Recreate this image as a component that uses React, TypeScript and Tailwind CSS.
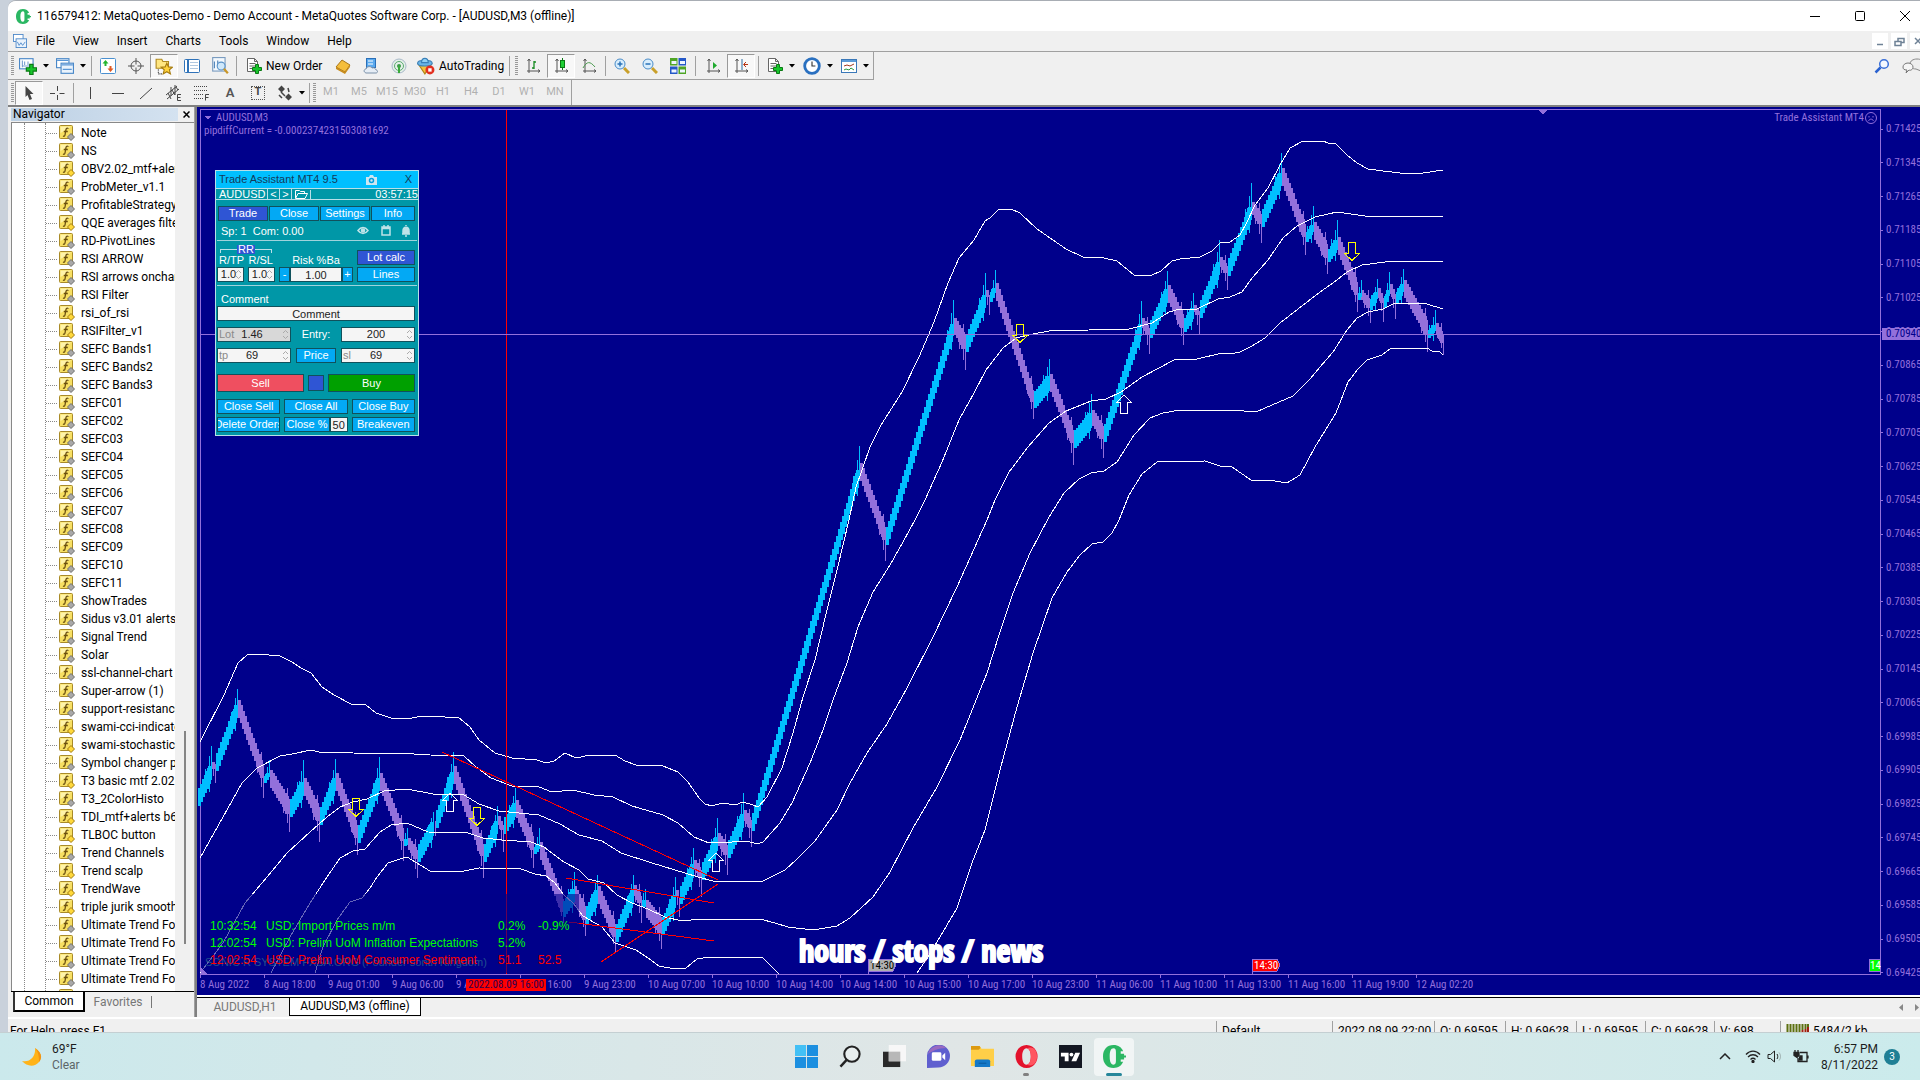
import type React from 'react';
import { useState } from 'react';

type Children = { children: React.ReactNode };

const UI = "font-['Roboto','Noto_Sans',sans-serif]";
const TAHOMA = "font-['Roboto_Condensed','Liberation_Sans_Narrow','Roboto',sans-serif]";
const ARIAL = "font-['Liberation_Sans',Arial,sans-serif]";

/* ---------- data ---------- */

const indicators: [string, boolean?][] = [
	['Note'],
	['NS'],
	['OBV2.02_mtf+alerts', true],
	['ProbMeter_v1.1'],
	['ProfitableStrategy'],
	['QQE averages filtered', true],
	['RD-PivotLines'],
	['RSI ARROW'],
	['RSI arrows onchart'],
	['RSI Filter'],
	['rsi_of_rsi', true],
	['RSIFilter_v1', true],
	['SEFC Bands1'],
	['SEFC Bands2'],
	['SEFC Bands3'],
	['SEFC01'],
	['SEFC02'],
	['SEFC03'],
	['SEFC04'],
	['SEFC05'],
	['SEFC06'],
	['SEFC07'],
	['SEFC08'],
	['SEFC09'],
	['SEFC10'],
	['SEFC11'],
	['ShowTrades'],
	['Sidus v3.01 alerts'],
	['Signal Trend'],
	['Solar'],
	['ssl-channel-chart'],
	['Super-arrow (1)'],
	['support-resistance'],
	['swami-cci-indicator', true],
	['swami-stochastic-', true],
	['Symbol changer p'],
	['T3 basic mtf 2.02', true],
	['T3_2ColorHisto'],
	['TDI_mtf+alerts b6', true],
	['TLBOC button', true],
	['Trend Channels'],
	['Trend scalp', true],
	['TrendWave', true],
	['triple jurik smooth', true],
	['Ultimate Trend Fo'],
	['Ultimate Trend Fo'],
	['Ultimate Trend Fo'],
	['Ultimate Trend Fo'],
	[''],
];

const prices = Array.from({ length: 26 }, (_, i) =>
	(0.71425 - i * 0.0008).toFixed(5),
);

const times = [
	'8 Aug 2022',
	'8 Aug 18:00',
	'9 Aug 01:00',
	'9 Aug 06:00',
	'9 Aug 11:00',
	'9 Aug 16:00',
	'9 Aug 23:00',
	'10 Aug 07:00',
	'10 Aug 10:00',
	'10 Aug 14:00',
	'10 Aug 14:00',
	'10 Aug 15:00',
	'10 Aug 17:00',
	'10 Aug 23:00',
	'11 Aug 06:00',
	'11 Aug 10:00',
	'11 Aug 13:00',
	'11 Aug 16:00',
	'11 Aug 19:00',
	'12 Aug 02:20',
];

const timeframes = ['M1', 'M5', 'M15', 'M30', 'H1', 'H4', 'D1', 'W1', 'MN'];

const menus = ['File', 'View', 'Insert', 'Charts', 'Tools', 'Window', 'Help'];

const status = [
	{ text: 'Default', width: 'w-[116px]' },
	{ text: '2022.08.09 22:00', width: 'w-[102px]' },
	{ text: 'O: 0.69595', width: 'w-[71px]' },
	{ text: 'H: 0.69628', width: 'w-[71px]' },
	{ text: 'L: 0.69595', width: 'w-[69px]' },
	{ text: 'C: 0.69628', width: 'w-[69px]' },
	{ text: 'V: 698', width: 'w-[66px]' },
];

// swing points: x, body extreme, wick tip
const swings = [
	[198, 806, 806], [212, 762, 746], [216, 771, 783], [238, 700, 689],
	[264, 783, 798], [270, 770, 760], [290, 817, 832], [304, 778, 760],
	[320, 825, 842], [336, 773, 759], [358, 843, 855], [380, 773, 757],
	[404, 846, 861], [408, 838, 828], [418, 862, 878], [434, 818, 812],
	[436, 828, 836], [454, 766, 752], [484, 862, 878], [498, 816, 806],
	[504, 834, 852], [516, 800, 788], [534, 854, 868], [540, 842, 828],
	[563, 917, 923], [574, 886, 872], [586, 924, 936], [598, 886, 875],
	[616, 942, 953], [634, 885, 875], [642, 907, 923], [646, 900, 889],
	[662, 935, 949], [676, 890, 877], [680, 904, 917], [694, 860, 848],
	[702, 880, 897], [718, 833, 818], [728, 858, 875], [744, 810, 793],
	[752, 831, 847], [860, 463, 446], [886, 545, 561], [954, 318, 300],
	[966, 352, 370], [986, 290, 273], [990, 302, 315], [996, 283, 270],
	[1034, 408, 419], [1050, 374, 359], [1074, 448, 465], [1092, 410, 394],
	[1104, 442, 458], [1142, 318, 301], [1150, 338, 354], [1168, 285, 271],
	[1184, 332, 345], [1194, 305, 293], [1200, 318, 334], [1220, 257, 240],
	[1228, 276, 290], [1252, 202, 183], [1262, 227, 243], [1282, 168, 153],
	[1306, 242, 255], [1314, 222, 206], [1328, 262, 274], [1338, 237, 220],
	[1358, 300, 312], [1361, 290, 280], [1370, 310, 323], [1378, 288, 279],
	[1384, 308, 322], [1390, 284, 272], [1396, 304, 319], [1404, 280, 269],
	[1428, 338, 352], [1436, 323, 310], [1444, 347, 355],
];

const bands = [
	'200,742 224,695 238,663 247,655 257,654 269,655 280,656 292,662 301,668 311,673 322,687 334,695 351,704 366,705 376,713 391,718 407,719 422,716 445,717 458,717 470,727 479,740 495,753 512,758 537,760 546,763 554,761 565,753 576,758 590,755 615,755 625,761 636,765 663,766 678,772 688,782 699,798 705,804 712,806 722,803 735,805 743,802 753,805 758,807 767,797 782,768 793,733 803,697 815,660 827,610 837,570 849,520 856,487 862,470 870,447 881,425 902,392 919,357 934,322 948,283 959,258 974,240 985,221 990,218 999,209 1011,209 1020,213 1037,229 1066,249 1083,257 1104,258 1117,261 1134,275 1150,276 1161,271 1172,261 1180,259 1200,257 1212,251 1220,243 1230,242 1240,235 1247,222 1255,205 1268,188 1280,165 1290,148 1303,141 1323,141 1328,143 1335,143 1347,155 1357,163 1368,169 1383,171 1400,173 1423,173 1443,170',
	'200,858 223,817 242,783 257,768 280,756 292,754 311,750 319,752 353,753 414,754 430,755 464,756 476,767 491,778 512,786 539,787 552,792 573,790 594,795 613,797 632,806 663,815 678,823 694,837 709,843 732,842 747,841 757,844 763,842 780,823 792,803 810,763 823,730 833,700 847,663 858,627 873,592 890,565 903,542 915,520 925,500 942,462 959,420 974,393 986,370 1003,348 1016,338 1033,334 1049,331 1089,330 1104,329 1129,329 1152,323 1169,312 1180,309 1197,309 1218,299 1230,297 1242,292 1252,278 1268,260 1283,238 1297,226 1315,217 1337,212 1365,216 1443,216',
	'200,973 223,943 245,903 267,877 287,853 310,832 327,817 340,807 353,802 367,799 384,791 407,789 433,794 464,795 479,804 499,811 539,815 560,824 579,835 602,841 621,853 652,863 698,877 713,881 763,881 785,870 797,859 815,841 837,810 850,783 867,753 887,724 907,688 933,637 957,587 970,558 987,520 995,500 1009,472 1028,447 1049,423 1066,411 1091,401 1106,399 1121,392 1142,377 1174,360 1197,359 1218,354 1235,353 1240,352 1252,346 1265,338 1280,323 1320,292 1333,283 1347,272 1362,265 1393,261 1430,261 1443,262',
	'271,973 290,937 310,903 327,877 340,858 353,851 365,849 380,832 391,825 407,823 428,832 468,833 483,838 502,840 531,842 544,847 564,862 579,870 588,879 604,883 617,895 632,903 648,909 665,917 682,921 700,919 760,919 775,923 788,927 813,930 837,926 850,918 873,897 890,872 913,828 937,787 960,740 987,673 1000,632 1013,593 1030,553 1049,517 1064,493 1079,479 1091,473 1104,471 1117,462 1134,435 1150,418 1163,413 1180,410 1232,410 1256,412 1272,405 1293,396 1310,379 1320,367 1333,352 1347,330 1357,318 1368,312 1383,309 1393,304 1403,303 1427,304 1443,309',
	'315,973 323,947 337,920 350,902 362,898 370,888 377,877 388,863 403,858 407,857 430,871 464,871 479,868 521,869 535,874 546,876 554,882 564,895 573,903 583,916 602,927 615,943 636,950 648,958 659,966 675,969 686,968 697,959 710,957 727,958 753,957 762,957 770,965 779,974',
	'917,973 928,957 940,937 957,908 972,863 985,830 1000,770 1017,707 1033,653 1052,598 1067,572 1080,555 1092,544 1103,542 1112,533 1119,520 1129,495 1142,474 1157,462 1205,461 1220,466 1232,467 1251,480 1275,481 1287,483 1300,475 1315,447 1336,413 1348,382 1358,369 1367,360 1382,355 1390,349 1410,348 1427,348 1432,351 1440,352 1443,355',
];

const BODY = 18;

function buildCandles() {
	let up = '';
	let down = '';
	for (let i = 1; i < swings.length; i++) {
		const [x0, y0] = swings[i - 1];
		const [x1, y1, tip] = swings[i];
		const rising = y1 < y0;
		const dir = rising ? -1 : 1;
		const bars = Math.max(1, Math.round((x1 - x0) / 2));
		// short swings get shorter bodies so that they stay readable
		const body = Math.min(BODY, Math.max(7, Math.round(Math.abs(y1 - y0) / 2)));
		const start = y0 + dir * body;
		for (let b = 1; b <= bars; b++) {
			const x = x0 + b * 2 - 2;
			const edge = bars === 1 ? y1 : start + ((y1 - start) * (b - 1)) / (bars - 1);
			const top = Math.round(rising ? edge : edge - body);
			const left = bars - b;
			let d = left === 0 ? '' : `M${x} ${top}h3v${body}h-3z`;
			// the last few bars of a swing carry the longer wicks
			if (left < 4) {
				const reach = Math.round([1, 0.6, 0.2, 0.4][left] * Math.abs(tip - y1));
				const y = rising ? top - reach : top;
				d += `M${x + 1} ${y}h1v${reach + body}h-1z`;
			}
			if (left === 1 && bars > 3) {
				const y = rising ? top : top - 8;
				d += `M${x + 1} ${y}h1v${body + 8}h-1z`;
			}
			if (rising) up += d;
			else down += d;
		}
	}
	return { up, down };
}

const candles = buildCandles();

/* ---------- small icons ---------- */

const Icon = ({ children, size = 16 }: Children & { size?: number }) => (
	<svg width={size} height={size} viewBox="0 0 16 16" fill="none" className="shrink-0">
		{children}
	</svg>
);

const PlusMark = () => (
	<path d="M9.500 6.500h3v3h3v3h-3v3h-3v-3h-3v-3h3z" fill="#17c52b" stroke="#0a7a14" />
);

const Axes = () => (
	<path d="M4 1v14M2 13h13M2.500 3L4 1l1.500 2M13 11.500l2 1.500-2 1.500" stroke="#555" />
);

const Page = () => (
	<path d="M1.500.500h7l3 3v10h-10zM8.500.500v3h3M3.500 5.500h6M3.500 8h6M3.500 10.500h4" fill="#fff" stroke="#666" />
);

const logoPath =
	'M11 0C4 0 0 5 0 12s4 12 11 12c5 0 8.500-2.500 10-6.500h-2.500v-2.500h3.500v-2h2v-2h-2V9h-3.500V6.500H21C19.500 2.500 16 0 11 0zM11 3.500c2 0 2.500 1.500 2.500 4v9c0 2.500-.5 4-2.500 4-3 0-4-3.500-4-8.500s1-8.500 4-8.500z';

const MetaLogo = ({ size }: { size: number }) => (
	<svg width={size} height={size} viewBox="0 0 24 24" className="shrink-0">
		<path fillRule="evenodd" fill="#2bb763" d={logoPath} />
	</svg>
);

const NavIcon = ({ custom }: { custom?: boolean }) => (
	<svg width="16" height="16" viewBox="0 0 16 16" className="shrink-0">
		<rect x=".5" y=".5" width="13" height="13" rx="1" fill="#f7df62" stroke="#a98a28" />
		<path d="M1.500 8V1.500h11z" fill="#fff3a8" />
		<path d="M9.500 3.500c-2-1-2.500.500-2.700 2L6 10c-.2 1.200-1 1.500-2 1M4.800 6.500h4" stroke="#6b5010" strokeWidth="1.300" fill="none" />
		<path d="M12 8.500l3.500 3.500-3.500 3.500L8.500 12z" fill={custom ? '#ffd83a' : '#a8a8a8'} stroke={custom ? '#a07a10' : '#6e6e6e'} />
	</svg>
);

const Caret = () => (
	<svg width="6" height="4" viewBox="0 0 6 4" className="shrink-0">
		<path d="M0 0h6L3 3.500z" fill="#000" />
	</svg>
);

const ico = {
	newChart: (
		<Icon size={18}>
			<rect x=".5" y="1.500" width="12" height="9" fill="#fff" stroke="#4a88c8" />
			<path d="M3 9V3M3 8h8M5 4v3M8 4v3" stroke="#7aa0d0" />
			<PlusMark />
		</Icon>
	),
	profiles: (
		<Icon size={18}>
			<rect x=".5" y="1.500" width="11" height="8" fill="#fff" stroke="#4a88c8" />
			<rect x="4.500" y="5.500" width="11" height="9" fill="#eaf3fc" stroke="#4a88c8" />
			<path d="M1 3h10M5 7h10M6 11h8" stroke="#5b97d6" />
		</Icon>
	),
	market: (
		<Icon>
			<rect x=".5" y=".5" width="15" height="15" rx="1" fill="#fff" stroke="#4a90d0" />
			<path d="M5.500 2l3 3.500h-2V8h-2V5.500h-2z" fill="#23b52f" />
			<path d="M10.500 14l-3-3.500h2V8h2v2.500h2z" fill="#e05a24" />
		</Icon>
	),
	data: (
		<Icon>
			<circle cx="8" cy="8" r="5" stroke="#555" />
			<path d="M8 0v6.500M8 9.500V16M0 8h6.500M9.500 8H16" stroke="#555" />
		</Icon>
	),
	navigator: (
		<Icon size={18}>
			<path d="M1 2h5l1 2h5v6H1z" fill="#ffe680" stroke="#b08a20" />
			<path d="M3 11v4h4" stroke="#222" strokeDasharray="1 1" />
			<path d="M10.500 5.500l1.500 3.300 3.500.300-2.700 2.300.900 3.600-3.200-1.900-3.200 1.900.900-3.600L5.500 9.100 9 8.800z" fill="#ffd23c" stroke="#a67c10" />
		</Icon>
	),
	terminal: (
		<Icon>
			<rect x=".5" y="1.500" width="15" height="13" rx="1" fill="#fff" stroke="#2f72b8" />
			<path d="M4 2v12" stroke="#2f72b8" strokeWidth="2" />
			<path d="M6 4.500h8M6 7.500h8M6 10.500h8" stroke="#b0c8e0" />
		</Icon>
	),
	tester: (
		<Icon size={18}>
			<rect x="1.500" y=".5" width="11" height="12" fill="#f3f8fd" stroke="#7b9cc0" />
			<path d="M3 10V4M6 8V3M9 9V5" stroke="#4a80b8" />
			<circle cx="9" cy="8" r="3.500" fill="#cfe8fb" stroke="#5b93c8" />
			<path d="M11.500 10.500l3.500 4" stroke="#c9972a" strokeWidth="2" />
		</Icon>
	),
	order: (
		<Icon>
			<Page />
			<PlusMark />
		</Icon>
	),
	book: (
		<Icon>
			<path d="M1 9l6-7 8 5-5 7z" fill="#f5be3c" stroke="#a8761a" />
			<path d="M1 9v2l9 5 5-7V7l-5 7z" fill="#c98d1e" />
		</Icon>
	),
	vps: (
		<Icon>
			<rect x="3.500" y=".5" width="9" height="9" fill="#5aa9ee" stroke="#2a6fb8" />
			<path d="M5 3h5M5 6h5" stroke="#fff" />
			<path d="M3 15c-3-1-2-4 0-4 1-3 5-3 6-1 2-1 4 1 4 2 2 0 2 3 0 3z" fill="#e6edf5" stroke="#7b90a8" />
		</Icon>
	),
	signal: (
		<Icon>
			<circle cx="8" cy="8" r="7" fill="#e4f0e8" stroke="#a8b8c8" />
			<circle cx="8" cy="8" r="4.500" stroke="#5aaa70" />
			<circle cx="8" cy="8" r="2" fill="#3b9b4a" />
			<path d="M8 8v7" stroke="#3aaa3a" strokeWidth="2" />
		</Icon>
	),
	auto: (
		<Icon size={18}>
			<path d="M1 6l6 9 6-9z" fill="#f5c23c" stroke="#b08418" />
			<ellipse cx="7" cy="5.500" rx="6.500" ry="2.500" fill="#69b5e8" stroke="#3a80b8" />
			<path d="M4 5c0-5 6-5 6 0z" fill="#8fd0f5" stroke="#3a80b8" />
			<circle cx="11.500" cy="11.500" r="4" fill="#e23020" />
			<rect x="10" y="10" width="3" height="3" fill="#fff" />
		</Icon>
	),
	bars: (
		<Icon>
			<Axes />
			<path d="M9 3v8M9 4h2M7 10h2" stroke="#158a20" strokeWidth="1.300" />
		</Icon>
	),
	candle: (
		<Icon>
			<Axes />
			<path d="M9.500 0v12" stroke="#0b7a14" />
			<rect x="7.500" y="2.500" width="4" height="7" fill="#1fd035" stroke="#0b7a14" />
		</Icon>
	),
	line: (
		<Icon>
			<Axes />
			<path d="M2 10c4-7 7-7 12-1" stroke="#4c9c50" />
		</Icon>
	),
	zoomIn: (
		<Icon>
			<path d="M10 10l5 5" stroke="#c9a02a" strokeWidth="3" />
			<circle cx="6" cy="6" r="5" fill="#d8edfc" stroke="#4a8cc8" />
			<path d="M3.500 6h5M6 3.500v5" stroke="#2a72b8" strokeWidth="1.500" />
		</Icon>
	),
	zoomOut: (
		<Icon>
			<path d="M10 10l5 5" stroke="#c9a02a" strokeWidth="3" />
			<circle cx="6" cy="6" r="5" fill="#d8edfc" stroke="#4a8cc8" />
			<path d="M3.500 6h5" stroke="#2a72b8" strokeWidth="1.500" />
		</Icon>
	),
	tile: (
		<Icon>
			<path d="M0 0h7.500v7.500H0zM8.500 8.500H16V16H8.500z" fill="#4fa525" />
			<path d="M8.500 0H16v7.500H8.500zM0 8.500h7.500V16H0z" fill="#2458c8" />
			<path d="M1.500 3h5v3h-5zM10 3h5v3h-5zM1.500 11.500h5v3h-5zM10 11.500h5v3h-5z" fill="#eef5ff" />
		</Icon>
	),
	scroll: (
		<Icon>
			<Axes />
			<path d="M8 4v7l4-3.500z" fill="#1faa2e" />
		</Icon>
	),
	shift: (
		<Icon>
			<Axes />
			<path d="M9 1v11" stroke="#2a6aa0" />
			<path d="M15 6.500h-4M13 4l-2.500 2.500L13 9" stroke="#b83210" />
		</Icon>
	),
	clock: (
		<Icon size={18}>
			<circle cx="8" cy="8" r="6.500" fill="#fff" stroke="#2a70c0" strokeWidth="2.500" />
			<path d="M8 4v4h3" stroke="#333" />
		</Icon>
	),
	template: (
		<Icon>
			<rect x=".5" y="1.500" width="15" height="13" fill="#fff" stroke="#3a78b8" />
			<path d="M1 3h14" stroke="#5b9bd8" strokeWidth="2" />
			<path d="M3 8l3-1 3 1 4-2" stroke="#a03a20" />
			<path d="M3 12l2-1 3 1 2-2 3 2" stroke="#2a9a3a" />
		</Icon>
	),
	cursor: (
		<Icon>
			<path d="M4.500 1l8 8H9l2 5-2.500 1-2-5-2 2z" fill="#444" />
		</Icon>
	),
	cross: (
		<Icon>
			<path d="M8.500 1v5M8.500 10v5M1 8.500h5M10.500 8.500h5" stroke="#444" />
		</Icon>
	),
	vline: (
		<Icon>
			<path d="M8.500 2v12" stroke="#444" />
		</Icon>
	),
	hline: (
		<Icon>
			<path d="M2 8.500h12" stroke="#444" />
		</Icon>
	),
	slash: (
		<Icon>
			<path d="M2 14L14 3" stroke="#444" />
		</Icon>
	),
	channel: (
		<Icon>
			<path d="M0 10L11 1M1 14L13 4M2 8l3 6M6 5l3 5M10 2l2 3M5 2v9M9 0v10" stroke="#444" />
			<path d="M15 9.500h-3.500v6H15M11.500 12.500h3" stroke="#444" />
		</Icon>
	),
	fibo: (
		<Icon>
			<path d="M0 1.500h14M0 5.500h14M0 9.500h9M0 13.500h9" stroke="#444" strokeDasharray="1 1" />
			<path d="M15 9.500h-3.500v6M11.500 12.500h3" stroke="#444" />
		</Icon>
	),
	arrows: (
		<Icon>
			<path d="M1 4l3.500-3.500L8 4 4.500 7.500zM8 12l3.500-3.500L15 12l-3.500 3.500z" fill="#444" />
			<path d="M4 7l4 4M2 10l3 3M11 3l1 4" stroke="#444" strokeWidth="1.500" />
		</Icon>
	),
};

/* ---------- toolbar pieces ---------- */

const ToolButton = ({
	label,
	pressed,
	children,
}: Children & { label: string; pressed?: boolean }) => (
	<button
		type="button"
		aria-label={label}
		className={`flex h-6 w-7 shrink-0 items-center justify-center ${
			pressed
				? 'border border-t-[#999] border-l-[#999] border-r-white border-b-white bg-[#f8f8f8]'
				: ''
		}`}
	>
		{children}
	</button>
);

const SplitButton = ({ label, children }: Children & { label: string }) => (
	<button
		type="button"
		aria-label={label}
		className="flex h-6 w-[37px] shrink-0 items-center justify-center gap-1.5"
	>
		{children}
		<Caret />
	</button>
);

const Sep = ({ wide }: { wide?: boolean }) => (
	<div className={`h-5 w-px shrink-0 bg-[#a0a0a0] ${wide ? 'mx-[3px]' : 'mx-0.5'}`} />
);

const Grip = () => (
	<div className="mr-px ml-[3px] flex h-5 w-[3px] shrink-0 flex-col justify-between">
		{Array.from({ length: 10 }, (_, i) => (
			<div key={i} className="h-px bg-[#999]" />
		))}
	</div>
);

const Toolbars = () => (
	<div className="flex shrink-0 flex-col border-b-2 border-[#808080] bg-[#f0f0f0] text-[12px] text-black">
		<div className="flex h-[29px] items-center justify-between border-t border-[#a0a0a0]">
			<div className="flex h-full items-center border-r border-b border-[#a0a0a0]">
				<Grip />
				<SplitButton label="New chart">{ico.newChart}</SplitButton>
				<SplitButton label="Profiles">{ico.profiles}</SplitButton>
				<Sep />
				<ToolButton label="Market Watch">{ico.market}</ToolButton>
				<ToolButton label="Data Window">{ico.data}</ToolButton>
				<ToolButton label="Navigator" pressed>{ico.navigator}</ToolButton>
				<ToolButton label="Terminal">{ico.terminal}</ToolButton>
				<ToolButton label="Strategy Tester">{ico.tester}</ToolButton>
				<Sep />
				<button type="button" className="flex h-6 w-[90px] shrink-0 items-center gap-1 pl-[7px] whitespace-nowrap">
					{ico.order}
					New Order
				</button>
				<ToolButton label="MetaEditor">{ico.book}</ToolButton>
				<ToolButton label="Hosting">{ico.vps}</ToolButton>
				<ToolButton label="Signals">{ico.signal}</ToolButton>
				<button type="button" className="flex h-6 w-[94px] shrink-0 items-center gap-1 pl-1 whitespace-nowrap">
					{ico.auto}
					AutoTrading
				</button>
				<Sep />
				<Grip />
				<ToolButton label="Bar Chart">{ico.bars}</ToolButton>
				<ToolButton label="Candlesticks" pressed>{ico.candle}</ToolButton>
				<ToolButton label="Line Chart">{ico.line}</ToolButton>
				<Sep />
				<ToolButton label="Zoom In">{ico.zoomIn}</ToolButton>
				<ToolButton label="Zoom Out">{ico.zoomOut}</ToolButton>
				<ToolButton label="Tile Windows">{ico.tile}</ToolButton>
				<Sep wide />
				<ToolButton label="Auto Scroll">{ico.scroll}</ToolButton>
				<ToolButton label="Chart Shift" pressed>{ico.shift}</ToolButton>
				<Sep wide />
				<SplitButton label="Indicators">{ico.order}</SplitButton>
				<SplitButton label="Periods">{ico.clock}</SplitButton>
				<SplitButton label="Templates">{ico.template}</SplitButton>
			</div>
			<div className="flex items-center gap-3 overflow-hidden">
				<button type="button" aria-label="Search">
					<Icon>
						<path d="M6.500 9.500L1.500 14.500" stroke="#2a62d0" strokeWidth="2.500" />
						<circle cx="10" cy="6" r="4.300" fill="#f4f8ff" stroke="#3a6fd8" strokeWidth="1.500" />
					</Icon>
				</button>
				<button type="button" aria-label="Chat" className="-mr-1">
					<svg width="22" height="16" viewBox="0 0 22 16">
						<path d="M14 11c-4 0-6-2-6-5s3-5 7-5 7 2 7 5-2 4-3 4v3z" fill="#eee" stroke="#888" />
						<path d="M5 12c-3 0-4-1-4-3s2-4 5-4 5 2 5 4-2 4-4 3l-3 3z" fill="#f6f6f6" stroke="#777" />
					</svg>
				</button>
			</div>
		</div>
		<div className="flex h-[25px] items-center">
			<Grip />
			<ToolButton label="Cursor" pressed>{ico.cursor}</ToolButton>
			<ToolButton label="Crosshair">{ico.cross}</ToolButton>
			<Sep />
			<ToolButton label="Vertical Line">{ico.vline}</ToolButton>
			<ToolButton label="Horizontal Line">{ico.hline}</ToolButton>
			<ToolButton label="Trendline">{ico.slash}</ToolButton>
			<ToolButton label="Channel">{ico.channel}</ToolButton>
			<ToolButton label="Fibonacci">{ico.fibo}</ToolButton>
			<ToolButton label="Text">
				<span className="text-[13px] font-semibold text-[#555]">A</span>
			</ToolButton>
			<ToolButton label="Text Label">
				<span className="flex size-[14px] items-center justify-center border border-dotted border-[#555] text-[11px] font-bold text-[#444]">
					T
				</span>
			</ToolButton>
			<SplitButton label="Arrows">{ico.arrows}</SplitButton>
			<div className="h-5 w-px bg-[#a0a0a0]" />
			<Grip />
			<div className="flex h-full items-center border-r border-[#a0a0a0] pr-0.5 text-[11px] text-[#b0b0b0]">
				{timeframes.map((tf) => (
					<button key={tf} type="button" className="w-7 text-center">
						{tf}
					</button>
				))}
			</div>
		</div>
	</div>
);

const TitleBar = () => (
	<>
		<div className="flex h-[30px] shrink-0 items-center bg-white">
			<div className="flex flex-1 items-center gap-1.5 pl-2 text-[12px] text-black">
				<MetaLogo size={15} />
				<span className="whitespace-nowrap">
					116579412: MetaQuotes-Demo - Demo Account - MetaQuotes Software Corp. - [AUDUSD,M3 (offline)]
				</span>
			</div>
			<div className="flex items-center">
				<button type="button" aria-label="Minimize" className="flex w-[45px] justify-center">
					<svg width="10" height="10"><path d="M0 5.500h10" stroke="#000" /></svg>
				</button>
				<button type="button" aria-label="Maximize" className="flex w-[45px] justify-center">
					<svg width="10" height="10"><rect x=".5" y=".5" width="9" height="9" rx="1" fill="none" stroke="#000" /></svg>
				</button>
				<button type="button" aria-label="Close" className="-mr-[7px] flex w-[45px] justify-center">
					<svg width="10" height="10"><path d="M0 0l10 10M10 0L0 10" stroke="#000" /></svg>
				</button>
			</div>
		</div>
		<div className="flex h-5 shrink-0 items-center bg-[#f0f0f0] pl-[5px] text-[12px] text-black">
			<Icon size={14}>
				<rect x=".5" y=".5" width="11" height="8" fill="#fff" stroke="#4a86c8" />
				<rect x="3.500" y="5.500" width="12" height="10" fill="#eaf3fc" stroke="#4a86c8" />
				<path d="M5 9l2 4 2-3 2 3 3-4" stroke="#4a86c8" />
			</Icon>
			<nav className="flex flex-1">
				{menus.map((m) => (
					<button key={m} type="button" className="px-[9px]">
						{m}
					</button>
				))}
			</nav>
			<div className="-mr-1.5 flex gap-[3px]">
				{['M4 10.500h6', 'M3 7.500h6v4H3zM6 7V4.500h6v4H9', 'M4 4l6 6M10 4l-6 6'].map((d) => (
					<button key={d} type="button" aria-label="Window control" className="flex size-4 items-center justify-center bg-white">
						<svg width="15" height="15"><path d={d} fill="none" stroke="#6f8296" strokeWidth="1.500" /></svg>
					</button>
				))}
			</div>
		</div>
	</>
);

/* ---------- navigator ---------- */

const Navigator = () => (
	<aside className="flex w-[187px] shrink-0 flex-col border-r border-[#a0a0a0] bg-[#f0f0f0] pl-[3px] text-[12px] text-black">
		<div className="flex h-[15px] shrink-0 items-center justify-between pr-1">
			<div className="h-[13px] w-[167px] bg-linear-to-r from-[#bcd0e4] to-[#d4e2f0] pl-0.5 leading-[13px]">
				Navigator
			</div>
			<button type="button" aria-label="Close navigator">
				<svg width="7" height="7"><path d="M.5.500l6 6M6.500.500l-6 6" stroke="#000" strokeWidth="1.500" /></svg>
			</button>
		</div>
		<div className="flex min-h-0 flex-1 border-t border-l border-[#888] bg-white">
			<div className="flex w-[163px] overflow-hidden">
				<div className="w-[13px] shrink-0 border-r border-dotted border-[#888]" />
				<div className="w-[21px] shrink-0 border-r border-dotted border-[#888]" />
				<ul className="min-w-0 flex-1 pt-px">
					{indicators.map(([name, custom], i) => (
						<li key={i} className="flex h-[18px] items-center overflow-hidden whitespace-nowrap">
							<span className="mr-0.5 w-[11px] shrink-0 border-t border-dotted border-[#888]" />
							<NavIcon custom={custom} />
							<span className="ml-1.5">{name}</span>
						</li>
					))}
				</ul>
			</div>
			<div className="flex flex-1 flex-col items-center bg-[#f0f0f0]">
				<div className="flex-[607]" />
				<div className="w-0.5 flex-[212] bg-[#858585]" />
				<div className="flex-[47]" />
			</div>
		</div>
		<div className="flex h-[26px] shrink-0 items-start border-t border-black">
			<button type="button" className="ml-0.5 h-5 w-[72px] border-2 border-t-0 border-black border-l-[#333] bg-white leading-[16px]">
				Common
			</button>
			<button type="button" className="h-5 w-[66px] leading-[16px] text-[#777]">
				Favorites
			</button>
			<div className="mt-1 h-3 w-px bg-[#777]" />
		</div>
	</aside>
);

/* ---------- trade panel ---------- */

const cyanButton = 'h-[15px] border border-[#10515c] bg-[#03a9f4] leading-[13px] text-white overflow-hidden whitespace-nowrap';
const blueButton = 'h-[15px] border border-[#10515c] bg-[#2f55d4] leading-[13px] text-white overflow-hidden whitespace-nowrap';

const Field = ({
	label,
	prefix,
	value,
	width,
	muted,
}: {
	label: string;
	prefix?: string;
	value: string;
	width: string;
	muted?: boolean;
}) => (
	<label
		className={`relative flex h-[15px] items-center border border-[#10515c] ${width} ${
			muted ? 'bg-[#d8d8d8]' : 'bg-[#f5f5f5]'
		}`}
	>
		{prefix && <span className="absolute left-px text-[#8a8a8a]">{prefix}</span>}
		<input
			aria-label={label}
			defaultValue={value}
			className="h-[13px] w-0 flex-1 bg-transparent pr-1 text-center text-[#222]"
		/>
		<svg width="7" height="11" viewBox="0 0 7 11" className="absolute right-px">
			<path d="M1 4l2.500-2.500L6 4M1 7l2.500 2.500L6 7" fill="none" stroke="#aaa" />
		</svg>
	</label>
);

const TradePanel = () => {
	const [tab, setTab] = useState('Trade');
	return (
		<section
			className={`absolute top-[63px] left-[18px] w-[204px] border border-[#b8dfe8] bg-[#0097a7] text-[11px] leading-[13px] text-white ${ARIAL}`}
		>
			<header className="flex h-[17px] items-center bg-[#00bfff] px-[3px] text-[#143a5a]">
				<span className="flex-1">Trade Assistant MT4 9.5</span>
				<svg width="11" height="10" viewBox="0 0 11 10" className="mr-7">
					<path d="M0 2h3l1-2h3l1 2h3v8H0z" fill="#cfe6f0" />
					<circle cx="5.500" cy="5.500" r="2" fill="none" stroke="#00a0e0" strokeWidth="1.500" />
				</svg>
				<button type="button" aria-label="Close panel" className="mr-[3px]">X</button>
			</header>
			<div className="flex h-3 items-center border-y border-[#b8dfe8] pl-[3px] leading-[10px]">
				<span className="w-[49px] border-r border-[#b8dfe8]">AUDUSD</span>
				<button type="button" className="w-3 border-r border-[#b8dfe8]">&lt;</button>
				<button type="button" className="w-3 border-r border-[#b8dfe8]">&gt;</button>
				<span className="flex w-[19px] justify-center border-r border-[#b8dfe8]">
					<svg width="13" height="9" viewBox="0 0 13 9">
						<path d="M.5 8V.500h4l1 1h4V3M.5 8.500L3 3.500h9.500l-2.500 5z" fill="none" stroke="#fff" />
					</svg>
				</span>
				<span className="flex-1 text-right">03:57:15</span>
			</div>
			<div className="mt-1.5 flex gap-px pr-0.5 pl-0.5">
				{['Trade', 'Close', 'Settings', 'Info'].map((t) => (
					<button
						key={t}
						type="button"
						onClick={() => setTab(t)}
						className={`${tab === t ? blueButton : cyanButton} ${t === 'Info' ? 'w-11' : 'w-[50px]'}`}
					>
						{t}
					</button>
				))}
			</div>
			<div className="mx-px flex h-5 items-center border-b border-[#9fd3dc] pr-1 pl-1">
				<span className="flex-1 pt-px">Sp: 1&nbsp; Com: 0.00</span>
				<svg width="57" height="12" viewBox="0 0 57 12" fill="none" stroke="#bfe3e8" strokeWidth="1.500">
					<path d="M2 5.500c3-4 7-4 10 0-3 4-7 4-10 0z" />
					<circle cx="7" cy="5.500" r="1.500" fill="#bfe3e8" />
					<path d="M26 2h8v8h-8zM26 3.500h8M28 0v2M32 0v2" />
					<path d="M47 9V6c0-5 6-5 6 0v3zM46 9h8M50 1V0M49 11h2" fill="#bfe3e8" />
				</svg>
			</div>
			<div className="mx-px flex h-[45px] justify-between border-b border-[#9fd3dc] pr-0.5">
				<div className="flex w-[58px] flex-col">
					<div className="mx-[3px] mt-1 flex items-start justify-center">
						<span className="mt-1 h-1 flex-1 border-t border-l border-[#b8dfe8]" />
						<span className="h-[9px] w-[18px] overflow-hidden bg-[#2f55d4] text-center leading-[9px]">RR</span>
						<span className="mt-1 h-1 flex-1 border-t border-r border-[#b8dfe8]" />
					</div>
					<div className="flex justify-between">
						<span className="pl-0.5">R/TP</span>
						<span className="pr-0.5">R/SL</span>
					</div>
					<div className="flex justify-between">
						<Field label="R/TP" value="1.0" width="w-[27px]" />
						<Field label="R/SL" value="1.0" width="w-[27px]" />
					</div>
				</div>
				<div className="flex w-[74px] flex-col items-center pt-[13px]">
					<label htmlFor="risk">Risk %Ba</label>
					<div className="flex">
						<button type="button" className={`${cyanButton} w-[11px]`}>-</button>
						<input id="risk" defaultValue="1.00" className="h-[15px] w-[52px] border border-[#10515c] bg-[#f5f5f5] text-center text-[#222]" />
						<button type="button" className={`${cyanButton} w-[11px]`}>+</button>
					</div>
				</div>
				<div className="flex w-[58px] flex-col gap-0.5 pt-[9px]">
					<button type="button" className={blueButton}>Lot calc</button>
					<button type="button" className={cyanButton}>Lines</button>
				</div>
			</div>
			<div className="pr-[3px] pl-px">
				<label htmlFor="comment" className="block pt-[7px] pl-1">Comment</label>
				<input id="comment" defaultValue="Comment" className="h-[15px] w-full border border-[#10515c] bg-[#f5f5f5] text-center text-[#222]" />
				<div className="mt-1.5 flex items-center justify-between">
					<Field label="Lot" prefix="Lot" value="1.46" width="w-[74px]" muted />
					<span>Entry:</span>
					<Field label="Entry" value="200" width="w-[74px]" />
				</div>
				<div className="mt-1.5 flex items-center justify-between">
					<Field label="Take profit" prefix="tp" value="69" width="w-[74px]" />
					<button type="button" className={`${cyanButton} w-10`}>Price</button>
					<Field label="Stop loss" prefix="sl" value="69" width="w-[74px]" />
				</div>
				<div className="mt-[11px] flex items-center justify-between">
					<button type="button" className="h-[18px] w-[87px] border border-[#10515c] bg-[#ef4f60] text-white">Sell</button>
					<button type="button" aria-label="Switch" className="size-4 border border-[#10515c] bg-[#2f55d4]" />
					<button type="button" className="h-[18px] w-[87px] border border-[#10515c] bg-[#00a000] text-white">Buy</button>
				</div>
				<div className="mt-[7px] grid grid-cols-3 gap-x-1 gap-y-[3px] pb-[3px]">
					<button type="button" className={cyanButton}>Close Sell</button>
					<button type="button" className={cyanButton}>Close All</button>
					<button type="button" className={cyanButton}>Close Buy</button>
					<button type="button" className={`${cyanButton} flex justify-center`}>Delete Orders</button>
					<div className="flex">
						<button type="button" className={`${cyanButton} flex flex-1 justify-center`}>Close %</button>
						<input aria-label="Close percent" defaultValue="50" className="h-[15px] w-[18px] border border-[#10515c] bg-[#f5f5f5] text-center text-[#222]" />
					</div>
					<button type="button" className={cyanButton}>Breakeven</button>
				</div>
			</div>
		</section>
	);
};

/* ---------- chart ---------- */

const Arrow = ({ x, y, up }: { x: number; y: number; up?: boolean }) => (
	<path
		transform={`translate(${x} ${y})`}
		d={up ? 'M0 0l7.500 7.500h-4V18.500h-7V7.500h-4z' : 'M0 18.500l-7.500-7h4V0h7v11.500h4z'}
		fill="none"
		stroke={up ? '#fff' : '#ffff00'}
	/>
);

const Flag = ({ x, fill, color, text }: { x: number; fill: string; color: string; text: string }) => (
	<g>
		<path d={`M${x}.500 974v-15.500`} stroke="#9370db" />
		<path d={`M${x} 959h25l3 6-3 6h-25z`} fill={fill} stroke="#9370db" />
		<text x={x + 2} y="969" fill={color} className={`text-[11px] ${TAHOMA}`}>
			{text}
		</text>
	</g>
);

// canvas coordinates start at the window origin, hence the shift
const Chart = () => (
	<svg className="absolute inset-0 h-full w-full" shapeRendering="crispEdges">
		<g transform="translate(-197 -107)">
			<path d={candles.down} fill="#9370db" />
			<path d={candles.up} fill="#00bfff" />
			<g fill="none" stroke="#fff">
				{bands.map((points, i) => (
					<polyline key={i} points={points} />
				))}
			</g>
			<path d="M442 752L718 880M566 878L714 903M569 922L714 941M601 962L718 884" stroke="#ff0000" />
			<rect x="506" y="110" width="1" height="864" fill="#ff0000" />
			<rect x="201" y="894" width="378" height="79" fill="#00008b" opacity=".6" />
			<path d="M201 334.500H1880" stroke="#9370db" />
			<Arrow x={356} y={798} />
			<Arrow x={450} y={793} up />
			<Arrow x={477} y={807} />
			<Arrow x={716} y={853} up />
			<Arrow x={1020} y={324} />
			<Arrow x={1124} y={395} up />
			<Arrow x={1352} y={242} />
			<path d="M1537 109h11l-5 6zM204 116h7l-3 4zM201 968l6 6h-6z" fill="#9370db" />
			<Flag x={868} fill="#b0b0b0" color="#000" text="14:30" />
			<Flag x={1252} fill="#ff0000" color="#fff" text="14:30" />
			<path d="M1869 959h11v12h-11z" fill="#00ff00" stroke="#9370db" />
			<text x="1870" y="969" fill="#fff" className={`text-[11px] ${TAHOMA}`}>14</text>
			<text x="799" y="962" fill="#fff" stroke="#fff" strokeWidth="2" className="font-['Open_Sans_Condensed','Roboto_Condensed','Liberation_Sans',sans-serif] text-[30px] font-bold">
				hours / stops / news
			</text>
		</g>
	</svg>
);

const news = [
	{ time: '10:32:54', event: 'USD: Import Prices m/m', actual: '0.2%', previous: '-0.9%', color: 'text-[#00ff00]' },
	{ time: '12:02:54', event: 'USD: Prelim UoM Inflation Expectations', actual: '5.2%', previous: '', color: 'text-[#00ff00]' },
	{ time: '12:02:54', event: 'USD: Prelim UoM Consumer Sentiment', actual: '51.1', previous: '52.5', color: 'text-[#ff0000]' },
];

const ChartWindow = () => (
	<div className={`flex min-h-0 flex-1 flex-col overflow-hidden border-b-2 border-white bg-[#00008b] text-[11px] text-[#9370db] ${TAHOMA}`}>
		<div className="flex min-h-0 flex-1">
			<div className="relative mt-0.5 ml-[3px] flex-1 border border-[#9370db]">
				<div className="absolute -top-[3px] -right-px -bottom-px -left-1 overflow-hidden">
					<Chart />
					<div className="flex items-start justify-between pt-1 pr-1 pl-[7px] leading-[13px]">
						<div>
							<div className="pl-3">AUDUSD,M3</div>
							<div>pipdiffCurrent = -0.0002374231503081692</div>
						</div>
						<div className="flex items-center gap-px">
							Trade Assistant MT4
							<svg width="12" height="12" viewBox="0 0 12 12" fill="none" stroke="#9370db">
								<circle cx="6" cy="6" r="5.500" />
								<path d="M3.500 9c1-2.500 4-2.500 5 0M4 4v1.500M8 4v1.500" />
							</svg>
						</div>
					</div>
					<div className={`absolute bottom-1.5 left-2 text-[11px] leading-[13px] text-[#20508f] ${ARIAL}`}>
						SONIC R SYSTEM FXSA.ORG (Founder sonth Kingdom)
					</div>
					<table className={`absolute bottom-1.5 left-[13px] table-fixed text-left text-[12px] leading-[17px] ${ARIAL}`}>
						<tbody>
							{news.map((n) => (
								<tr key={n.event} className={n.color}>
									<td className="w-14 p-0">{n.time}</td>
									<td className="w-[232px] p-0 whitespace-nowrap">{n.event}</td>
									<td className="w-10 p-0">{n.actual}</td>
									<td className="w-10 p-0">{n.previous}</td>
								</tr>
							))}
						</tbody>
					</table>
					<TradePanel />
				</div>
			</div>
			<div className="relative -mb-1 flex w-[39px] shrink-0 flex-col justify-between pt-4 leading-[12px]">
				{prices.map((p) => (
					<div key={p} className="flex items-center gap-[3px]">
						<span className="h-px w-0.5 shrink-0 bg-[#9370db]" />
						{p}
					</div>
				))}
				<div className="absolute top-[221px] left-px bg-[#9370db] pr-2 pl-1 text-[#00008b]">0.70940</div>
			</div>
		</div>
		<div className="relative flex h-5 shrink-0 overflow-hidden pl-[3px] leading-[13px]">
			{times.map((t, i) => (
				<div key={i} className="w-16 shrink-0 whitespace-nowrap">
					<div className="h-[3px] border-l border-[#9370db]" />
					{t}
				</div>
			))}
			<div className="absolute top-1 left-[269px] w-20 bg-[#ff0000] text-center leading-[12px] whitespace-nowrap text-[#300050]">
				2022.08.09 16:00
			</div>
		</div>
	</div>
);

const ChartTabs = () => (
	<div className="flex h-5 shrink-0 items-start border-t border-black bg-[#f0f0f0] text-[12px] leading-[17px]">
		<button type="button" className="h-[18px] w-[92px] pl-1 text-[#777]">AUDUSD,H1</button>
		<button type="button" className="h-[18px] w-[132px] border-x border-b border-black bg-white text-black">
			AUDUSD,M3 (offline)
		</button>
		<div className="flex flex-1 items-center justify-end gap-3 pt-1.5 pr-px">
			<svg width="4" height="7"><path d="M4 0v7L0 3.500z" fill="#888" /></svg>
			<svg width="4" height="7"><path d="M0 0v7l4-3.500z" fill="#888" /></svg>
		</div>
	</div>
);

const StatusBar = () => (
	<div className="flex h-[15px] shrink-0 overflow-hidden border-t-2 border-white bg-[#f0f0f0] text-[12px] whitespace-nowrap text-black">
		<span className="flex-1 pt-[3px] pl-0.5">For Help, press F1</span>
		{status.map((s) => (
			<span key={s.text} className={`mt-0.5 border-l border-[#a0a0a0] pt-px pl-[5px] ${s.width}`}>
				{s.text}
			</span>
		))}
		<span className="mt-0.5 flex w-[140px] gap-1 border-l border-[#a0a0a0] pt-px pl-[5px]">
			<svg width="23" height="16" className="mt-0.5">
				<path d="M1.500 0v14M4.500 0v14M7.500 0v10M10.500 0v9M13.500 0v8M16.500 0v6M19.500 0v5M22 0v3" stroke="#5c7010" strokeWidth="2" />
				<path d="M7.500 10v6M10.500 9v7M13.500 8v8M16.500 6v10M19.500 5v11M22 3v13" stroke="#a02010" strokeWidth="2" />
			</svg>
			5484/2 kb
		</span>
	</div>
);

/* ---------- taskbar ---------- */

const Taskbar = () => (
	<footer className="grid h-12 shrink-0 grid-cols-3 items-center border-t border-[#c4cfd2] bg-linear-to-r from-[#cbe9ec] via-[#e0e6e6] to-[#cbebec] text-[12px] text-[#1c1c1c]">
		<button type="button" className="flex items-center gap-2.5 pl-[22px] text-left leading-4">
			<svg width="20" height="20" viewBox="0 0 20 20">
				<path d="M13 1c6 4 8 9 4 14S5 20 0 14c8 2 14-5 13-13z" fill="#ffb319" />
				<path d="M13 1c6 4 8 9 4 14 0-4 0-9-4-14z" fill="#f29415" />
			</svg>
			<span>
				69°F
				<br />
				<span className="text-[#5c6568]">Clear</span>
			</span>
		</button>
		<div className="flex justify-center gap-1">
			<TaskButton label="Start">
				<path d="M0 0h11.500v11.500H0zM12.500 0H24v11.500H12.500zM0 12.500h11.500V24H0zM12.500 12.500H24V24H12.500z" fill="#1c8fe0" />
				<path d="M0 0h11.500v11.500H0z" fill="#43c0f5" />
			</TaskButton>
			<TaskButton label="Search">
				<circle cx="13.500" cy="9.500" r="8" fill="#e8eeee" stroke="#222" strokeWidth="2.200" />
				<path d="M8 15.500L1.500 22.500" stroke="#222" strokeWidth="2.500" />
			</TaskButton>
			<TaskButton label="Task View">
				<path d="M0 7h18v16H0z" fill="#2a2a2a" />
				<path d="M6 0h18v17H6z" fill="#f8f8f8" opacity=".92" />
				<path d="M6 7h12v10H6z" fill="#b8b8b8" />
			</TaskButton>
			<TaskButton label="Chat">
				<path d="M0 24V12A12 12 0 1 1 12 23.500z" fill="#5f5fcf" />
				<path d="M1 9A12 12 0 0 1 20 3C12 3 6 6 1 9z" fill="#9a6ac0" />
				<rect x="5" y="7.500" width="10" height="9" rx="1.500" fill="#fff" />
				<path d="M16 11l3-3v8l-3-3z" fill="#fff" />
			</TaskButton>
			<TaskButton label="File Explorer">
				<path d="M0 1h9l2 3h13v18H0z" fill="#ffcf48" />
				<path d="M0 1h9l1 2-2 2H0z" fill="#dd9a10" />
				<path d="M4 23v-6q0-2 2-2h12q2 0 2 2v6z" fill="#1579c8" />
				<path d="M8 19h8" stroke="#0a5a9c" />
			</TaskButton>
			<TaskButton label="Opera" dot="w-1.5 bg-[#808080]">
				<path fillRule="evenodd" fill="#e3122c" d="M12 0a11.500 12 0 1 0 .1 0zM12 3.500c3 0 4.500 4 4.500 8.500s-1.500 8.500-4.500 8.500S7.500 16.500 7.500 12 9 3.500 12 3.500z" />
				<path fillRule="evenodd" fill="#ff5560" d="M12 3.500c3 0 4.500 4 4.500 8.500s-1.500 8.500-4.500 8.500c8 3 11-3 11-8.500S20 .500 12 3.500z" />
			</TaskButton>
			<TaskButton label="TradingView">
				<path d="M0 0h24v24H0z" fill="#131722" />
				<path d="M2 8h8v9H6v-5H2z" fill="#fff" />
				<circle cx="13" cy="10" r="2" fill="#fff" />
				<path d="M17 8h5l-4 9h-5z" fill="#fff" />
			</TaskButton>
			<TaskButton label="MetaTrader" dot="w-4 bg-[#26869a]" active>
				<path fillRule="evenodd" fill="#2bb763" d={logoPath} />
			</TaskButton>
		</div>
		<div className="flex items-center justify-end gap-2.5 pr-5">
			<svg width="12" height="7" viewBox="0 0 12 7" fill="none" stroke="#222" strokeWidth="1.500" className="mr-1"><path d="M1 6l5-5 5 5" /></svg>
			<svg width="16" height="13" viewBox="0 0 16 13" fill="none" stroke="#222" strokeWidth="1.300">
				<path d="M1 4.500c4-4.500 10-4.500 14 0M3 7c3-3 7-3 10 0M5.500 9.500c1.500-1.500 3.500-1.500 5 0" />
				<circle cx="8" cy="11.500" r="1" fill="#222" />
			</svg>
			<svg width="16" height="13" viewBox="0 0 16 13" fill="none" stroke="#222" className="-ml-1">
				<path d="M1 4.500h2.500l4-3.500v11l-4-3.500H1z" />
				<path d="M10 4c1 1.500 1 3.500 0 5" />
				<path d="M12 2.500c2 2.500 2 5.500 0 8" stroke="#9aa" />
			</svg>
			<svg width="17" height="14" viewBox="0 0 17 14" fill="none" stroke="#222" strokeWidth="1.300">
				<path d="M7 2.500h7v9H5V8M15 5.500v3" />
				<path d="M1 2.500h5v3l-2 2-3-2zM2 0v2M5 0v2" fill="#222" />
				<path d="M7 6h2v4H6z" fill="#222" />
			</svg>
			<div className="w-[58px] text-right leading-4">
				<div>6:57 PM</div>
				<div>8/11/2022</div>
			</div>
			<span className="-ml-1 flex size-4 items-center justify-center rounded-full bg-[#1f7f95] text-[10px] text-white">3</span>
		</div>
	</footer>
);

function TaskButton({
	label,
	active,
	dot,
	children,
}: Children & { label: string; active?: boolean; dot?: string }) {
	return (
		<button
			type="button"
			aria-label={label}
			className={`relative flex h-[38px] w-10 items-center justify-center rounded ${active ? 'bg-white/60' : ''}`}
		>
			<svg width="23" height="23" viewBox="0 0 24 24" fill="none">
				{children}
			</svg>
			{dot && <span className={`absolute bottom-0 h-[3px] rounded-full ${dot}`} />}
		</button>
	);
}

export default function App() {
	return (
		<div className={`flex h-screen flex-col overflow-hidden bg-[#c9d1db] ${UI}`}>
			<div className="ml-2 flex min-h-0 flex-1 flex-col overflow-hidden rounded-tl-lg border-t border-[#a8adb4] bg-[#f0f0f0]">
				<TitleBar />
				<Toolbars />
				<div className="flex min-h-0 flex-1">
					<Navigator />
					<main className="flex min-w-0 flex-1 flex-col border-l-2 border-[#808080]">
						<ChartWindow />
						<ChartTabs />
					</main>
				</div>
				<StatusBar />
			</div>
			<Taskbar />
		</div>
	);
}
